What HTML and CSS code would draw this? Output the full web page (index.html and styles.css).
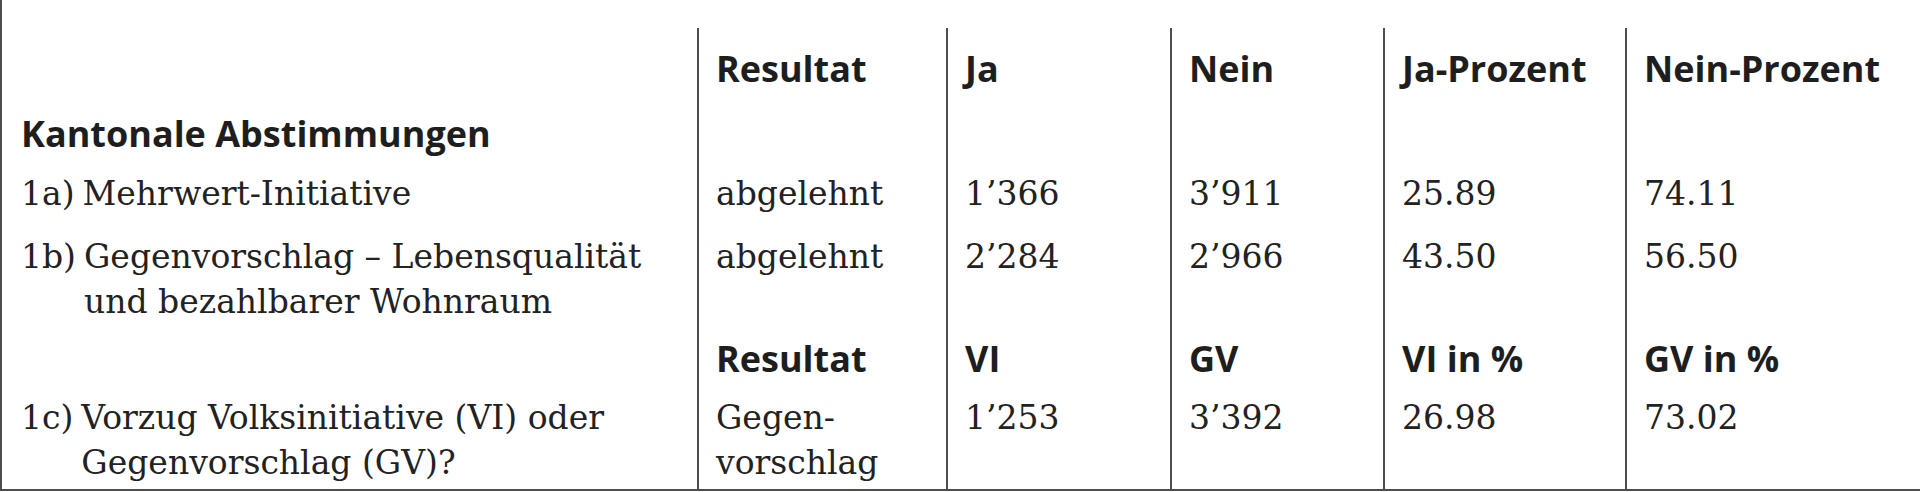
FILE: index.html
```html
<!DOCTYPE html>
<html lang="de">
<head>
<meta charset="utf-8">
<title>Kantonale Abstimmungen</title>
<link rel="stylesheet" href="styles.css">
</head>
<body>
<div class="frame">
  <table class="results">
    <colgroup>
      <col class="c-label">
      <col class="c-res">
      <col class="c-ja">
      <col class="c-nein">
      <col class="c-jap">
      <col class="c-neinp">
    </colgroup>
    <tr class="r-head">
      <td class="label"></td>
      <td class="h">Resultat</td>
      <td class="h">Ja</td>
      <td class="h">Nein</td>
      <td class="h">Ja-Prozent</td>
      <td class="h">Nein-Prozent</td>
    </tr>
    <tr class="r-title">
      <td class="label h">Kantonale Abstimmungen</td>
      <td></td><td></td><td></td><td></td><td></td>
    </tr>
    <tr class="r-1a">
      <td class="label"><div class="item"><span class="num">1a)</span><span class="txt">Mehrwert-Initiative</span></div></td>
      <td>abgelehnt</td>
      <td>1’366</td>
      <td>3’911</td>
      <td>25.89</td>
      <td>74.11</td>
    </tr>
    <tr class="r-1b">
      <td class="label"><div class="item"><span class="num">1b)</span><span class="txt">Gegenvorschlag – Lebensqualität<br>und bezahlbarer Wohnraum</span></div></td>
      <td>abgelehnt</td>
      <td>2’284</td>
      <td>2’966</td>
      <td>43.50</td>
      <td>56.50</td>
    </tr>
    <tr class="r-sub">
      <td class="label"></td>
      <td class="h">Resultat</td>
      <td class="h">VI</td>
      <td class="h">GV</td>
      <td class="h">VI in %</td>
      <td class="h">GV in %</td>
    </tr>
    <tr class="r-1c">
      <td class="label"><div class="item"><span class="num">1c)</span><span class="txt">Vorzug Volksinitiative (VI) oder<br>Gegenvorschlag (GV)?</span></div></td>
      <td>Gegen-<br>vorschlag</td>
      <td>1’253</td>
      <td>3’392</td>
      <td>26.98</td>
      <td>73.02</td>
    </tr>
  </table>
</div>
</body>
</html>
```
FILE: styles.css
```css
html, body {
  margin: 0;
  padding: 0;
  background: #ffffff;
}

.frame {
  width: 1918px;
  height: 461px;
  padding-top: 28px;
  border-left: 2px solid #4d4d4d;
  border-bottom: 2px solid #4d4d4d;
}

.results {
  width: 1918px;
  table-layout: fixed;
  border-collapse: separate;
  border-spacing: 0;
  color: #222222;
  font-family: "DejaVu Serif", "Liberation Serif", serif;
  font-size: 33px;
  line-height: 45px;
}

.c-label { width: 695px; }
.c-res { width: 249px; }
.c-ja { width: 224px; }
.c-nein { width: 213px; }
.c-jap { width: 242px; }
.c-neinp { width: 295px; }

.results td {
  vertical-align: top;
  padding: 0 0 0 17px;
  border-left: 2px solid #4d4d4d;
  white-space: nowrap;
}

.results td.label {
  border-left: none;
  padding-left: 19px;
}

.results .h {
  font-family: "Open Sans", "DejaVu Sans", sans-serif;
  font-weight: 700;
  font-size: 36px;
  color: #1e1e1e;
}

.r-head td { padding-top: 18px; padding-bottom: 10px; }
.r-title td { padding-top: 10px; padding-bottom: 7px; }
.r-1a td { padding-top: 8px; padding-bottom: 9px; }
.r-1b td { padding-top: 9px; padding-bottom: 6px; }
.r-sub td { padding-top: 6px; padding-bottom: 7px; }
.r-1c td { padding-top: 7px; padding-bottom: 4px; }

.item {
  display: flex;
  gap: 8px;
}

.num {
  flex: none;
}
```
